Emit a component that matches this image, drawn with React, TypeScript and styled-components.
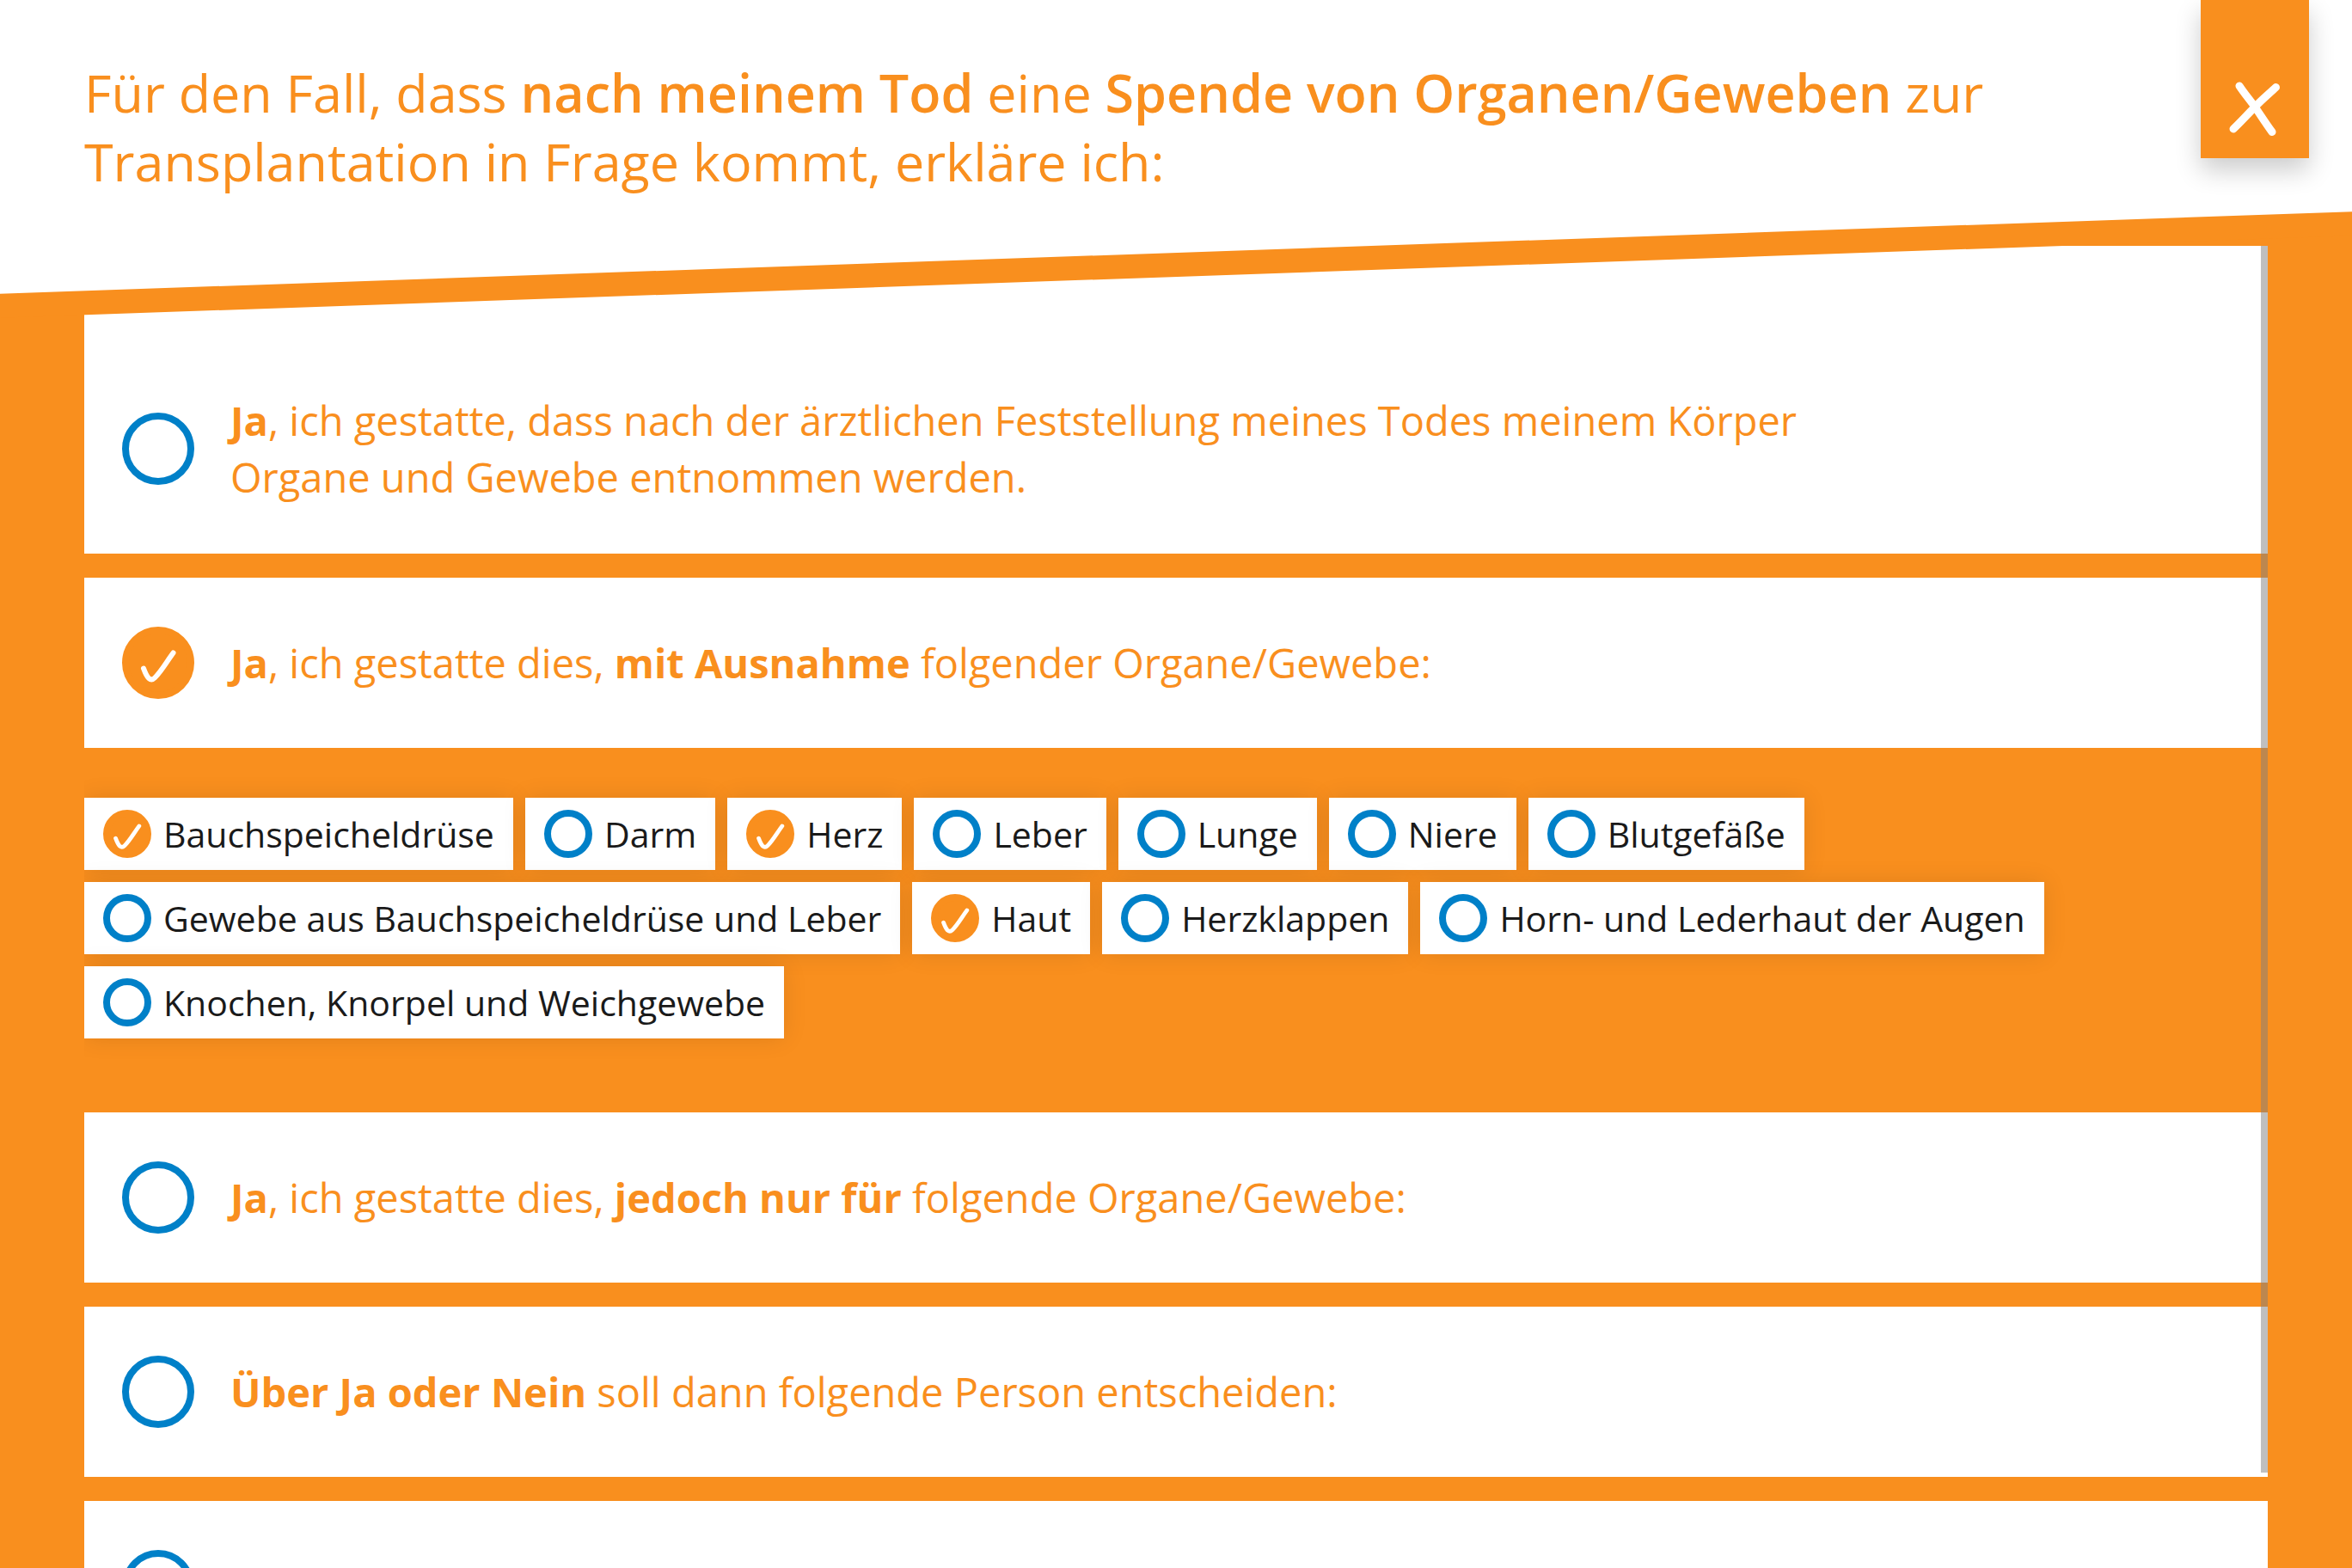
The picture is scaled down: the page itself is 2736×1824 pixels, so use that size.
import React, { ReactNode, useEffect, useRef, useState } from "react";
import styled, { createGlobalStyle, ThemeProvider } from "styled-components";

const theme = {
  orange: "#f98f1e",
  blue: "#0080c8",
  ink: "#1a1a1a",
  gutter: "98px",
};

const GlobalStyle = createGlobalStyle`
  *, *::before, *::after { box-sizing: border-box; }
  body { margin: 0; font-family: "Open Sans", "Noto Sans", sans-serif; }
  b { font-weight: 700; }
`;

const Page = styled.main`
  display: flex;
  flex-direction: column;
  height: 100vh;
  overflow: hidden;
  background: ${(p) => p.theme.orange};
  color: ${(p) => p.theme.orange};
`;

const Header = styled.header`
  position: relative;
  z-index: 1;
  padding: 68px 240px 58px ${(p) => p.theme.gutter};

  &::before,
  &::after {
    content: "";
    position: absolute;
    z-index: -1;
    inset: -120px 0 -36px;
    background: ${(p) => p.theme.orange};
    transform: skewY(-2deg);
  }

  &::after {
    bottom: -8px;
    background: #fff;
  }
`;

const Title = styled.h1`
  margin: 0;
  font-size: 61px;
  font-weight: 400;
  line-height: 80px;

  b {
    font-weight: 650;
  }
`;

const CloseButton = styled.button`
  position: absolute;
  top: 0;
  right: 50px;
  display: flex;
  align-items: flex-end;
  justify-content: center;
  width: 126px;
  height: 184px;
  padding: 0 0 25px;
  border: 0;
  background: ${(p) => p.theme.orange};
  box-shadow: 0 14px 28px rgba(0, 0, 0, 0.2);
  cursor: pointer;
`;

const CloseIcon = styled.svg`
  width: 64px;
  height: 64px;
  fill: none;
  stroke: #fff;
  stroke-width: 9;
  stroke-linecap: round;
`;

const ListFrame = styled.div`
  position: relative;
  flex: 1;
  min-height: 0;
  margin: 0 ${(p) => p.theme.gutter};
`;

const List = styled.form`
  display: flex;
  flex-direction: column;
  gap: 28px;
  height: 100%;
  overflow-y: auto;
  scrollbar-width: none;
`;

const ScrollThumb = styled.div`
  position: absolute;
  top: 0;
  right: 0;
  width: 8px;
  background: rgba(128, 128, 128, 0.5);
`;

const Option = styled.label<{ $first?: boolean }>`
  display: flex;
  flex-shrink: 0;
  align-items: center;
  gap: 42px;
  min-height: 198px;
  padding: ${(p) => (p.$first ? "170px" : "56px")} 44px 56px;
  background: #fff;
  cursor: pointer;
`;

const OptionText = styled.span`
  max-width: 1900px;
  font-size: 47px;
  line-height: 66px;
`;

const Organs = styled.fieldset`
  display: flex;
  flex-shrink: 0;
  flex-wrap: wrap;
  gap: 14px;
  margin: 0;
  padding: 30px 252px 58px 0;
  border: 0;
`;

const Chip = styled.label`
  display: flex;
  align-items: center;
  gap: 14px;
  height: 84px;
  padding: 0 22px;
  background: #fff;
  box-shadow: 0 0 28px rgba(0, 0, 0, 0.1);
  color: ${(p) => p.theme.ink};
  font-size: 41px;
  line-height: 56px;
  white-space: nowrap;
  cursor: pointer;
`;

const Mark = styled.span<{ $size: number }>`
  display: grid;
  flex: none;
  place-items: center;
  width: ${(p) => p.$size}px;
  height: ${(p) => p.$size}px;

  > * {
    grid-area: 1 / 1;
  }
`;

const MarkInput = styled.input`
  appearance: none;
  width: 100%;
  height: 100%;
  margin: 0;
  border: 8px solid ${(p) => p.theme.blue};
  border-radius: 50%;
  cursor: pointer;

  &:checked {
    border-color: ${(p) => p.theme.orange};
    background: ${(p) => p.theme.orange};
  }
`;

const Tick = styled.svg<{ $size: number }>`
  width: ${(p) => p.$size}px;
  height: ${(p) => p.$size}px;
  fill: none;
  stroke: #fff;
  stroke-width: 6;
  stroke-linecap: round;
  stroke-linejoin: round;
  pointer-events: none;
  visibility: hidden;

  input:checked + & {
    visibility: visible;
  }
`;

const TICK = "M7 30.5C9 36 10.500 39.500 13 42Q16.500 45 20 41.500C28 33.500 33 24 41.500 12.500";

const options: { id: string; text?: ReactNode; label?: string }[] = [
  {
    id: "all",
    text: (
      <>
        <b>Ja</b>, ich gestatte, dass nach der ärztlichen Feststellung meines Todes meinem Körper
        Organe und Gewebe entnommen werden.
      </>
    ),
  },
  {
    id: "except",
    text: (
      <>
        <b>Ja</b>, ich gestatte dies, <b>mit Ausnahme</b> folgender Organe/Gewebe:
      </>
    ),
  },
  {
    id: "only",
    text: (
      <>
        <b>Ja</b>, ich gestatte dies, <b>jedoch nur für</b> folgende Organe/Gewebe:
      </>
    ),
  },
  {
    id: "person",
    text: (
      <>
        <b>Über Ja oder Nein</b> soll dann folgende Person entscheiden:
      </>
    ),
  },
  { id: "no", label: "Nein" },
];

const organs = [
  "Bauchspeicheldrüse",
  "Darm",
  "Herz",
  "Leber",
  "Lunge",
  "Niere",
  "Blutgefäße",
  "Gewebe aus Bauchspeicheldrüse und Leber",
  "Haut",
  "Herzklappen",
  "Horn- und Lederhaut der Augen",
  "Knochen, Knorpel und Weichgewebe",
];

export default function App() {
  const [choice, setChoice] = useState("except");
  const [excluded, setExcluded] = useState(["Bauchspeicheldrüse", "Herz", "Haut"]);
  const listRef = useRef<HTMLFormElement>(null);
  const [thumb, setThumb] = useState({ top: 0, height: 0 });

  const updateThumb = () => {
    const el = listRef.current;
    if (!el) return;
    const ratio = el.clientHeight / el.scrollHeight;
    setThumb({
      top: Math.round(el.scrollTop * ratio),
      height: ratio < 1 ? Math.round(el.clientHeight * ratio) : 0,
    });
  };

  useEffect(() => {
    updateThumb();
    window.addEventListener("resize", updateThumb);
    return () => window.removeEventListener("resize", updateThumb);
  }, [choice]);

  const toggle = (name: string) =>
    setExcluded((list) => (list.includes(name) ? list.filter((n) => n !== name) : [...list, name]));

  return (
    <ThemeProvider theme={theme}>
      <GlobalStyle />
      <Page>
        <Header>
          <Title>
            Für den Fall, dass <b>nach meinem Tod</b> eine <b>Spende von Organen/Geweben</b> zur
            Transplantation in Frage kommt, erkläre ich:
          </Title>
          <CloseButton type="button" aria-label="Schließen">
            <CloseIcon viewBox="0 0 64 64" aria-hidden="true">
              <path d="M14 5C20 14 26 21 32.500 30C39 39.500 45 49 52 58.500" />
              <path d="M56.500 6.500C48 14.500 40 21 32 29.500C23.500 38 15.500 47 7 55" />
            </CloseIcon>
          </CloseButton>
        </Header>
        <ListFrame>
          <List ref={listRef} onScroll={updateThumb}>
            {options.map((o, i) => (
              <React.Fragment key={o.id}>
                <Option $first={i === 0}>
                  <Mark $size={84}>
                    <MarkInput
                      type="radio"
                      name="choice"
                      aria-label={o.label}
                      checked={choice === o.id}
                      onChange={() => setChoice(o.id)}
                    />
                    <Tick $size={48} viewBox="0 0 48 48" aria-hidden="true">
                      <path d={TICK} />
                    </Tick>
                  </Mark>
                  {o.text && <OptionText>{o.text}</OptionText>}
                </Option>
                {o.id === "except" && choice === "except" && (
                  <Organs aria-label="Ausgenommene Organe/Gewebe">
                    {organs.map((name) => (
                      <Chip key={name}>
                        <Mark $size={56}>
                          <MarkInput
                            type="checkbox"
                            checked={excluded.includes(name)}
                            onChange={() => toggle(name)}
                          />
                          <Tick $size={38} viewBox="0 0 48 48" aria-hidden="true">
                            <path d={TICK} />
                          </Tick>
                        </Mark>
                        {name}
                      </Chip>
                    ))}
                  </Organs>
                )}
              </React.Fragment>
            ))}
          </List>
          <ScrollThumb style={{ top: thumb.top, height: thumb.height }} />
        </ListFrame>
      </Page>
    </ThemeProvider>
  );
}
